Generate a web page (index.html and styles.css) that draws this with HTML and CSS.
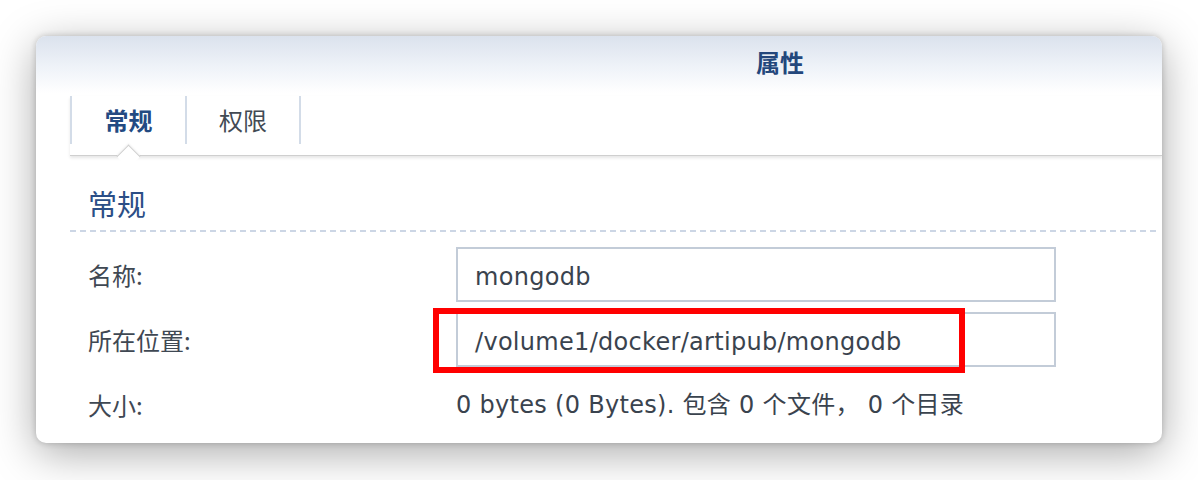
FILE: index.html
```html
<!DOCTYPE html>
<html lang="zh-CN">
<head>
<meta charset="utf-8">
<title>属性</title>
<link rel="stylesheet" href="styles.css">
</head>
<body>
<div class="window">
  <div class="titlebar"><span class="title">属性</span></div>
  <div class="tabbar">
    <div class="tab active">常规</div>
    <div class="tab">权限</div>
  </div>
  <div class="content">
    <div class="section-head">常规</div>
    <div class="rule"></div>
    <div class="form">
      <div class="label">名称:</div>
      <div class="field"><div class="input">mongodb</div></div>
      <div class="label">所在位置:</div>
      <div class="field"><div class="input">/volume1/docker/artipub/mongodb</div><div class="highlight"></div></div>
      <div class="label">大小:</div>
      <div class="field"><div class="value">0 bytes (0 Bytes). 包含 0 个文件， 0 个目录</div></div>
    </div>
  </div>
</div>
</body>
</html>
```
FILE: styles.css
```css
html, body {
  margin: 0;
  padding: 0;
  background: #ffffff;
}
body {
  box-sizing: border-box;
  min-height: 480px;
  padding: 36px 0 0 36px;
  font-family: "DejaVu Sans", "Noto Sans CJK SC", sans-serif;
}
.window {
  width: 1126px;
  height: 407px;
  background: #ffffff;
  border-radius: 10px;
  box-shadow: 0 0 6px rgba(0, 0, 0, 0.20), 0 10px 44px rgba(0, 0, 0, 0.34);
  overflow: hidden;
}
.titlebar {
  height: 60px;
  box-sizing: border-box;
  padding: 10px 0 0 362px;
  text-align: center;
  background: linear-gradient(to bottom, #dbe2ed 0px, #eef2f8 30px, #ffffff 57px, #ffffff 60px);
}
.title {
  font-family: "Noto Sans CJK SC", sans-serif;
  font-weight: 700;
  font-size: 24px;
  line-height: 32px;
  color: #23477c;
}
.tabbar {
  margin-left: 34px;
  height: 60px;
  box-sizing: border-box;
  padding-bottom: 12px;
  display: flex;
  border-bottom: 1px solid #cfcfcf;
  box-shadow: 0 2px 3px rgba(0, 0, 0, 0.10);
  position: relative;
}
.tab {
  position: relative;
  box-sizing: border-box;
  height: 48px;
  width: 114px;
  border-right: 2px solid #d3dce8;
  font-family: "Noto Sans CJK SC", sans-serif;
  font-size: 24px;
  line-height: 48px;
  text-align: center;
  color: #424a54;
}
.tab.active {
  width: 117px;
  border-left: 2px solid #d3dce8;
  font-weight: 700;
  color: #234a82;
}
.tab.active::after {
  content: "";
  position: absolute;
  left: 48px;
  top: 52px;
  width: 16px;
  height: 16px;
  background: #ffffff;
  border-top: 1px solid #cfcfcf;
  border-left: 1px solid #cfcfcf;
  transform: rotate(45deg);
  box-shadow: -1px -1px 2px rgba(0, 0, 0, 0.05);
}
.content {
  padding-left: 34px;
}
.section-head {
  padding: 27px 0 7px 18px;
  font-family: "Noto Sans CJK SC", sans-serif;
  font-size: 29px;
  line-height: 40px;
  color: #2b4e86;
}
.rule {
  height: 2px;
  margin-right: 4px;
  background: repeating-linear-gradient(to right, #ccd6e5 0px, #ccd6e5 6px, transparent 6px, transparent 10px);
}
.form {
  margin-top: 15px;
  padding-left: 18px;
  display: grid;
  grid-template-columns: 368px 600px;
  grid-auto-rows: 55px;
  row-gap: 10px;
}
.label {
  font-family: "Noto Sans CJK SC", sans-serif;
  font-size: 24px;
  line-height: 55px;
  color: #3f4853;
}
.field {
  position: relative;
}
.input {
  box-sizing: border-box;
  height: 55px;
  border: 2px solid #c3ccd8;
  padding: 5px 0 0 17px;
  font-size: 24px;
  line-height: 46px;
  letter-spacing: 0.3px;
  color: #3a434e;
  white-space: nowrap;
}
.value {
  padding-top: 2px;
  font-size: 24px;
  line-height: 53px;
  letter-spacing: 0.3px;
  color: #3a434e;
  white-space: nowrap;
}
.highlight {
  position: absolute;
  left: -23px;
  top: -4px;
  width: 532px;
  height: 65px;
  box-sizing: border-box;
  border: 6px solid #ff0000;
}
```
